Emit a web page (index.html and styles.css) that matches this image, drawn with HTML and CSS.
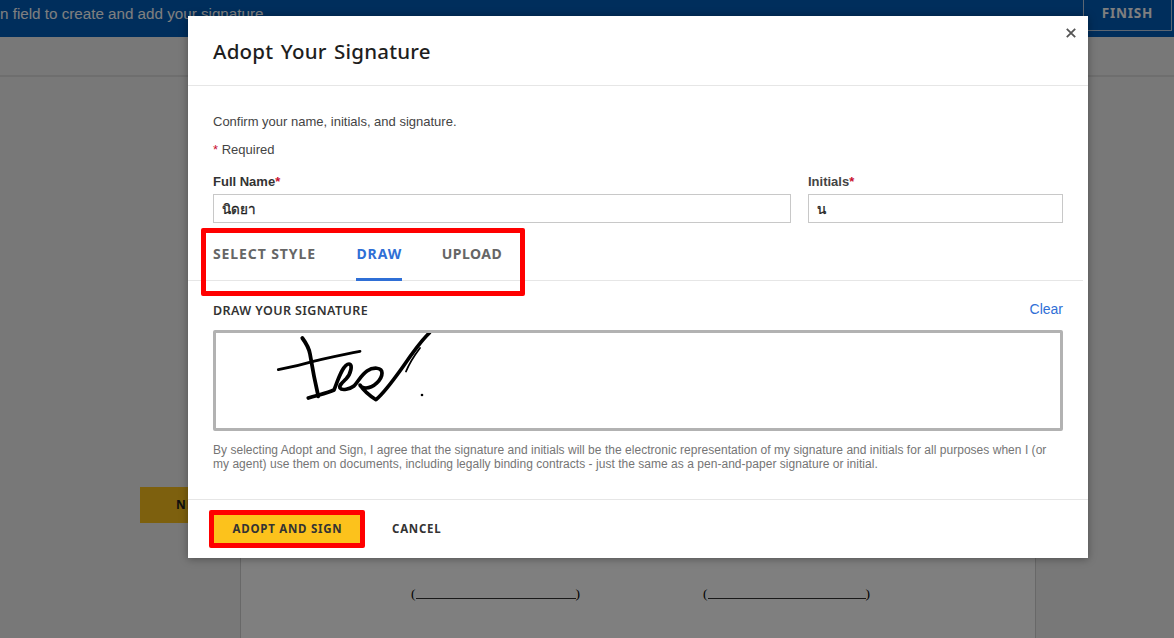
FILE: index.html
```html
<!DOCTYPE html>
<html lang="en">
<head>
<meta charset="utf-8">
<title>Adopt Your Signature</title>
<link rel="stylesheet" href="styles.css">
</head>
<body>
<div class="page">
  <header class="topbar">
    <span class="topbar-text">n field to create and add your signature</span>
    <span class="finish">FINISH</span>
  </header>
  <div class="toolbar"></div>
  <main class="workspace">
    <aside class="rail"><span class="next">NEXT</span></aside>
    <section class="doc">
      <div class="blanks">
        <span class="blank blank-a">(<i></i>)</span>
        <span class="blank blank-b">(<i></i>)</span>
      </div>
    </section>
  </main>
</div>
<div class="backdrop"></div>
<div class="modal">
  <div class="modal-head">
    <h1>Adopt Your Signature</h1>
    <svg class="close" viewBox="0 0 10 10" width="10" height="10"><path d="M.8.8l8.4 8.4M9.200.8L.8 9.200" stroke="#555" stroke-width="1.800" fill="none"/></svg>
  </div>
  <div class="modal-body">
    <p class="confirm">Confirm your name, initials, and signature.</p>
    <p class="required"><span class="star">*</span> Required</p>
    <div class="fields">
      <div class="field field-name">
        <label>Full Name<span class="star">*</span></label>
        <div class="input">นิดยา</div>
      </div>
      <div class="field field-initials">
        <label>Initials<span class="star">*</span></label>
        <div class="input">น</div>
      </div>
    </div>
    <nav class="tabs">
      <span class="tab">SELECT STYLE</span>
      <span class="tab tab-active">DRAW</span>
      <span class="tab">UPLOAD</span>
    </nav>
    <div class="draw-head">
      <span class="draw-title">DRAW YOUR SIGNATURE</span>
      <span class="clear">Clear</span>
    </div>
    <div class="canvas">
      <svg class="sig" width="844" height="95" viewBox="216 333 844 95">
        <g fill="none" stroke="#000" stroke-linecap="round" stroke-linejoin="round">
          <path stroke-width="3.800" d="M302.300 338C306 343 309 348 310 354C312 366 315 382 318.300 396.300"/>
          <path stroke-width="2.800" d="M278.300 369.700C292 367 304 364 313.300 361.300C328 358 344 354 360 351.300"/>
          <path stroke-width="3.700" d="M308.300 398C318 395 328 393 334 390C338 380 343 364 349 364C353 364 351 374 346 379C342 383 339 385 340 388C342 391 350 389 354 386C358 382 361 375 367 371C373 367 382 367 382 373C382 380 373 388 366 388C362 388 360 386 360 385C364 391 370 396 376 399.700C384 393 395 378 403.300 366.300C411 355 420 342 429.300 333"/>
          <path stroke-width="1.800" d="M406 371.500C409 364 414 356 420 348"/>
        </g>
        <circle cx="422" cy="395" r="1.300" fill="#000"/>
      </svg>
    </div>
    <p class="legal">By selecting Adopt and Sign, I agree that the signature and initials will be the electronic representation of my signature and initials for all purposes when I (or my agent) use them on documents, including legally binding contracts - just the same as a pen-and-paper signature or initial.</p>
  </div>
  <div class="modal-foot">
    <span class="btn btn-primary">ADOPT AND SIGN</span>
    <span class="btn btn-cancel">CANCEL</span>
  </div>
  <div class="mark mark-tabs"></div>
  <div class="mark mark-btn"></div>
</div>
</body>
</html>
```
FILE: styles.css
```css
* { box-sizing: border-box; }
html, body { margin: 0; height: 100%; overflow: hidden; }
body { background: #fff; font-family: "Liberation Sans", Arial, sans-serif; color: #1e1e1e; position: relative; }

.page { display: flex; flex-direction: column; height: 638px; }
.topbar { height: 37px; background: #005cb9; display: flex; justify-content: space-between; color: #fff; flex: none; }
.topbar-text { font-size: 15.200px; line-height: 27px; white-space: nowrap; }
.finish { width: 89px; height: 31px; margin-right: 2px; border: 1px solid #b8cde4; border-top: 0; font: 700 13.500px/27px "Noto Sans", sans-serif; letter-spacing: .8px; text-align: center; }
.toolbar { height: 40px; flex: none; background: #f0f0f0; border-bottom: 2px solid #dcdcdc; }
.workspace { flex: 1; display: flex; background: #f0f0f0; }
.rail { width: 240px; flex: none; padding: 410px 0 0 140px; }
.next { display: block; width: 100px; height: 36px; background: #fbc01c; font: 700 12px/36px "Noto Sans", sans-serif; letter-spacing: 1px; color: #1e1e1e; padding-left: 36px; }
.doc { width: 796px; flex: none; background: #fff; border-left: 1px solid #d0d0d0; border-right: 1px solid #d0d0d0; padding-top: 507px; }
.blanks { position: relative; height: 20px; }
.blank { position: absolute; top: 0; font: 13.500px/20px "Liberation Serif", serif; color: #000; display: flex; }
.blank i { display: block; height: 15px; border-bottom: 1px solid #333; }
.blank-a { left: 170px; } .blank-a i { width: 160px; }
.blank-b { left: 462px; } .blank-b i { width: 158px; }

.backdrop { position: absolute; inset: 0; background: rgba(0,0,0,.5); }
.modal { position: absolute; left: 188px; top: 16px; width: 900px; height: 542px; background: #fff; box-shadow: 0 1px 8px rgba(0,0,0,.35); display: flex; flex-direction: column; }

.modal-head { height: 70px; flex: none; border-bottom: 1px solid #e6e6e6; padding: 20px 25px 0; position: relative; }
.modal-head h1 { margin: 0; font: 500 20.500px/30px "Noto Sans", sans-serif; color: #1e1e1e; letter-spacing: .2px; word-spacing: 2px; }
.close { position: absolute; right: 12px; top: 12px; }

.modal-body { flex: 1; padding: 0 25px; }
.confirm { margin: 28px 0 0; font-size: 13px; line-height: 16px; color: #444; }
.required { margin: 12px 0 0; font-size: 13px; line-height: 16px; color: #444; }
.star { color: #c9102f; }

.fields { display: flex; gap: 17px; margin-top: 16px; }
.field-name { width: 578px; }
.field-initials { width: 255px; }
.field label { display: block; font-size: 13px; font-weight: 700; line-height: 16px; color: #333; }
.field-initials label { color: #444; }
.input { margin-top: 4px; height: 29px; border: 1px solid #c8c8c8; padding: 0 7.500px; font: 400 13.500px/27px "Noto Sans CJK SC", "DejaVu Sans", sans-serif; color: #1e1e1e; -webkit-text-stroke: .3px #1e1e1e; }

.tabs { display: flex; gap: 40.500px; height: 58px; margin: 0 -20px 0 -25px; padding: 0 0 0 25px; border-bottom: 1px solid #e6e6e6; }
.tab { font: 700 14px/62px "Noto Sans", sans-serif; letter-spacing: .9px; color: #666; height: 58px; }
.tab:last-child { margin-left: -1px; letter-spacing: .5px; }
.tab-active { color: #2f6fd6; border-bottom: 3px solid #2f6fd6; }

.draw-head { display: flex; justify-content: space-between; margin-top: 22px; height: 16px; align-items: center; }
.draw-title { font: 600 12.500px/16px "Noto Sans", sans-serif; letter-spacing: .4px; color: #333; }
.clear { font-size: 14px; line-height: 16px; color: #2f6fd6; margin-bottom: 4px; }

.canvas { margin-top: 11px; width: 850px; height: 101px; border: 3px solid #b2b2b2; border-radius: 2px; background: #fff; overflow: hidden; }
.sig { display: block; }

.legal { margin: 12px 0 0; width: 845px; font-size: 12px; letter-spacing: .03px; line-height: 14px; color: #757575; }

.modal-foot { height: 59px; flex: none; border-top: 1px solid #e6e6e6; display: flex; align-items: center; padding: 0 25px; }
.btn { font: 700 11.500px/1 "Noto Sans", sans-serif; letter-spacing: .75px; color: #333; }
.btn-primary { width: 146px; height: 28px; margin-left: 1px; padding-left: 1px; line-height: 28px; text-align: center; background: #fcc21c; }
.btn-cancel { margin-left: 32px; }

.mark { position: absolute; border: 5px solid #f00; border-radius: 2px; }
.mark-tabs { left: 13px; top: 212px; width: 324px; height: 68px; }
.mark-btn { left: 21px; top: 494px; width: 156px; height: 38px; }
```
